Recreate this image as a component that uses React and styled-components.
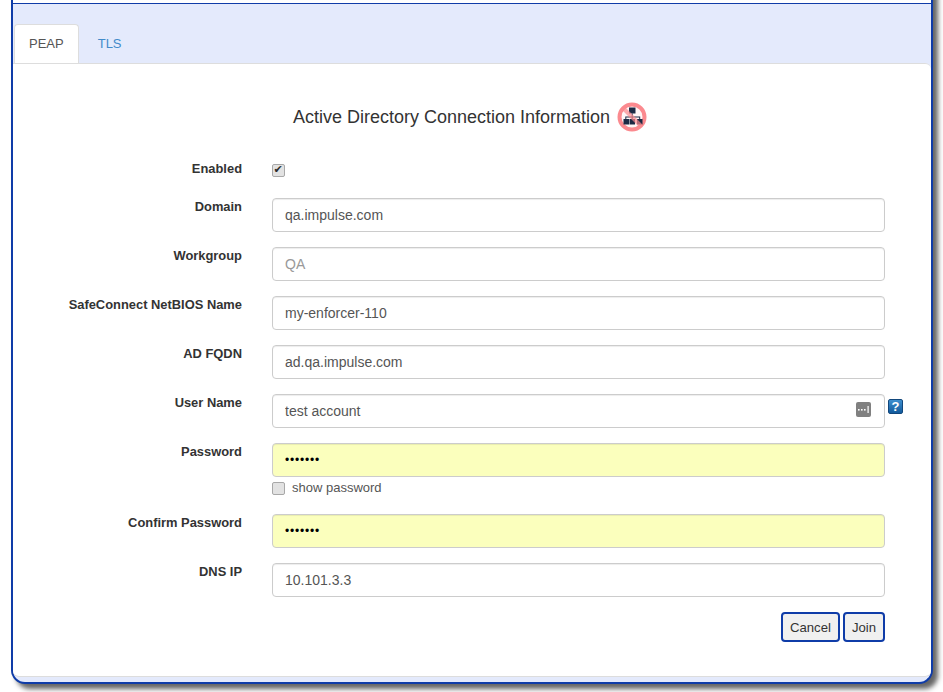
import React from "react";
import styled, { createGlobalStyle } from "styled-components";

const Global = createGlobalStyle`
  html, body { margin: 0; padding: 0; background: #fff; }
  body { width: 943px; height: 692px; overflow: hidden; font-family: "Liberation Sans", Arial, sans-serif; font-size: 14px; color: #333; }
`;

const Page = styled.div`
  box-sizing: border-box;
  width: 943px;
  height: 692px;
  padding-left: 11px;
  overflow: hidden;
`;

const Dialog = styled.div`
  box-sizing: border-box;
  width: 922px;
  height: 704px;
  margin-top: -20px;
  display: flex;
  flex-direction: column;
  background: #e4eafc;
  border: 2px solid #0f3ca8;
  border-top: none;
  border-radius: 0 0 14px 14px;
  box-shadow: 5px 5px 5px rgba(35, 35, 35, 0.7);
`;

const TitleBar = styled.div`
  flex: none;
  box-sizing: border-box;
  height: 24px;
  background: #fff;
  border-bottom: 1px solid #0f3ca8;
`;

const TabBar = styled.div`
  display: flex;
  gap: 4px;
  height: 59px;
  box-sizing: border-box;
  padding: 20px 0 0 1px;
  flex: none;
`;

const Tab = styled.div`
  box-sizing: border-box;
  height: 39px;
  padding: 10px 14px 0;
  line-height: 17px;
  font-size: 13px;
  border-radius: 4px 4px 0 0;
  color: ${(p) => (p.$active ? "#555" : "#428bca")};
  background: ${(p) => (p.$active ? "#fff" : "transparent")};
  border: 1px solid ${(p) => (p.$active ? "#ddd" : "transparent")};
  border-bottom: none;
`;

const Content = styled.div`
  height: 614px;
  flex: none;
  box-sizing: border-box;
  background: #fff;
  border-top: 1px solid #ddd;
  border-bottom: 1px solid #ddd;
  border-radius: 0 6px 6px 6px;
  padding-top: 2px;
`;

const Heading = styled.h3`
  margin: 36px 0 28px;
  height: 30px;
  display: flex;
  align-items: center;
  justify-content: center;
  gap: 7px;
  padding-right: 4px;
  font-size: 18px;
  font-weight: 400;
  color: #333;
`;

const Form = styled.form`
  display: flex;
  flex-direction: column;
  margin: 0;
`;

const Row = styled.div`
  display: flex;
  align-items: flex-start;
  gap: 30px;
  margin-bottom: ${(p) => p.$gap ?? 15}px;
`;

const Label = styled.label`
  box-sizing: border-box;
  width: 229px;
  flex: none;
  text-align: right;
  font-weight: 700;
  font-size: 12.9px;
  line-height: 17px;
  color: #333;
`;

const Control = styled.div`
  position: relative;
  width: 613px;
  flex: none;
`;

const Input = styled.input`
  display: block;
  box-sizing: border-box;
  width: 100%;
  height: 34px;
  padding: 6px 12px;
  font-family: "Liberation Sans", Arial, sans-serif;
  font-size: 14px;
  color: #555;
  background: ${(p) => (p.$fill ? "#fbffbd" : "#fff")};
  border: 1px solid #ccc;
  border-radius: 4px;
  box-shadow: inset 0 1px 1px rgba(0, 0, 0, 0.075);
  outline: none;
  &[type="password"] {
    color: #000;
    font-size: 12px;
    letter-spacing: 0.8px;
  }
  &::placeholder { color: #999; opacity: 1; }
`;

const Check = styled.input`
  appearance: none;
  -webkit-appearance: none;
  box-sizing: border-box;
  display: block;
  position: relative;
  flex: none;
  width: 13px;
  height: 13px;
  margin: 0;
  background: #e2e2e2;
  border: 1px solid #a8a8a8;
  border-radius: 2px;
  &:checked::after {
    content: "✔";
    position: absolute;
    left: 0.5px;
    top: -1px;
    font: 11px/12px "DejaVu Sans", sans-serif;
    color: #2b2b2b;
  }
`;

const CheckWrap = styled.div`
  height: 17px;
  padding-top: 4px;
  box-sizing: border-box;
`;

const ShowRow = styled.label`
  display: flex;
  align-items: center;
  gap: 7px;
  height: 17px;
  margin: 2px 0 3px;
  font-size: 13px;
  color: #555;
  ${Check} { margin-top: 2px; }
`;

const Vault = styled.svg`
  position: absolute;
  right: 14px;
  top: 8px;
  width: 15px;
  height: 15px;
`;

const HelpBadge = styled.div`
  width: 15px;
  height: 15px;
  flex: none;
  margin: 5px 0 0 -27px;
  box-sizing: border-box;
  border: 1px solid #12477c;
  border-radius: 2px;
  background: linear-gradient(#3e8fcf, #125a9c);
  color: #fff;
  font: 700 13px/13px "Liberation Sans", Arial, sans-serif;
  text-align: center;
`;

const Actions = styled.div`
  display: flex;
  justify-content: flex-end;
  gap: 3px;
  width: 872px;
`;

const Button = styled.button`
  box-sizing: border-box;
  height: 30px;
  padding: 0 7px;
  font-family: "Liberation Sans", Arial, sans-serif;
  font-size: 13.15px;
  color: #333;
  background: #f0f0f0;
  border: 2px solid #0f3ca8;
  border-radius: 4px;
`;

const NoAdIcon = () => (
  <svg width="30" height="30" viewBox="0 0 30 30">
    <circle cx="15" cy="15" r="12.5" fill="#fff6f6" stroke="#fb8a8f" strokeWidth="4" />
    <g fill="#1c2a44">
      <rect x="12" y="5.500" width="6.500" height="6" />
      <rect x="6.500" y="17" width="5.500" height="5.500" />
      <rect x="12.500" y="17" width="5.500" height="5.500" />
      <rect x="20" y="17" width="5.500" height="5.500" />
      <path d="M14.700 11.500h1v3H23.200V17h-1v-1.500H15.700V17h-1v-1.500H9.300V17h-1v-2.500h6.400z" />
    </g>
    <path d="M6 6L24 24" stroke="#fb8a8f" strokeWidth="4" opacity="0.7" />
  </svg>
);

const fields = [
  { label: "Domain", value: "qa.impulse.com" },
  { label: "Workgroup", placeholder: "QA" },
  { label: "SafeConnect NetBIOS Name", value: "my-enforcer-110" },
  { label: "AD FQDN", value: "ad.qa.impulse.com" },
];

export default function App() {
  return (
    <Page>
      <Global />
      <Dialog>
        <TitleBar />
        <TabBar>
          <Tab $active>PEAP</Tab>
          <Tab>TLS</Tab>
        </TabBar>
        <Content>
          <Heading>
            Active Directory Connection Information
            <NoAdIcon />
          </Heading>
          <Form>
            <Row $gap={21}>
              <Label>Enabled</Label>
              <CheckWrap><Check type="checkbox" defaultChecked /></CheckWrap>
            </Row>
            {fields.map((f) => (
              <Row key={f.label}>
                <Label>{f.label}</Label>
                <Control><Input defaultValue={f.value} placeholder={f.placeholder} /></Control>
              </Row>
            ))}
            <Row>
              <Label>User Name</Label>
              <Control>
                <Input defaultValue="test account" />
                <Vault viewBox="0 0 15 15">
                  <rect width="15" height="15" rx="2" fill="#808080" />
                  <g fill="#fff">
                    <rect x="2" y="7" width="1.600" height="1.600" />
                    <rect x="5" y="7" width="1.600" height="1.600" />
                    <rect x="8" y="7" width="1.600" height="1.600" />
                    <rect x="11.500" y="4" width="1.200" height="7" />
                  </g>
                </Vault>
              </Control>
              <HelpBadge>?</HelpBadge>
            </Row>
            <Row>
              <Label>Password</Label>
              <Control>
                <Input type="password" $fill defaultValue="1234567" />
                <ShowRow>
                  <Check type="checkbox" />
                  show password
                </ShowRow>
              </Control>
            </Row>
            <Row>
              <Label>Confirm Password</Label>
              <Control><Input type="password" $fill defaultValue="1234567" /></Control>
            </Row>
            <Row>
              <Label>DNS IP</Label>
              <Control><Input defaultValue="10.101.3.3" /></Control>
            </Row>
            <Actions>
              <Button type="button">Cancel</Button>
              <Button type="button">Join</Button>
            </Actions>
          </Form>
        </Content>
      </Dialog>
    </Page>
  );
}
